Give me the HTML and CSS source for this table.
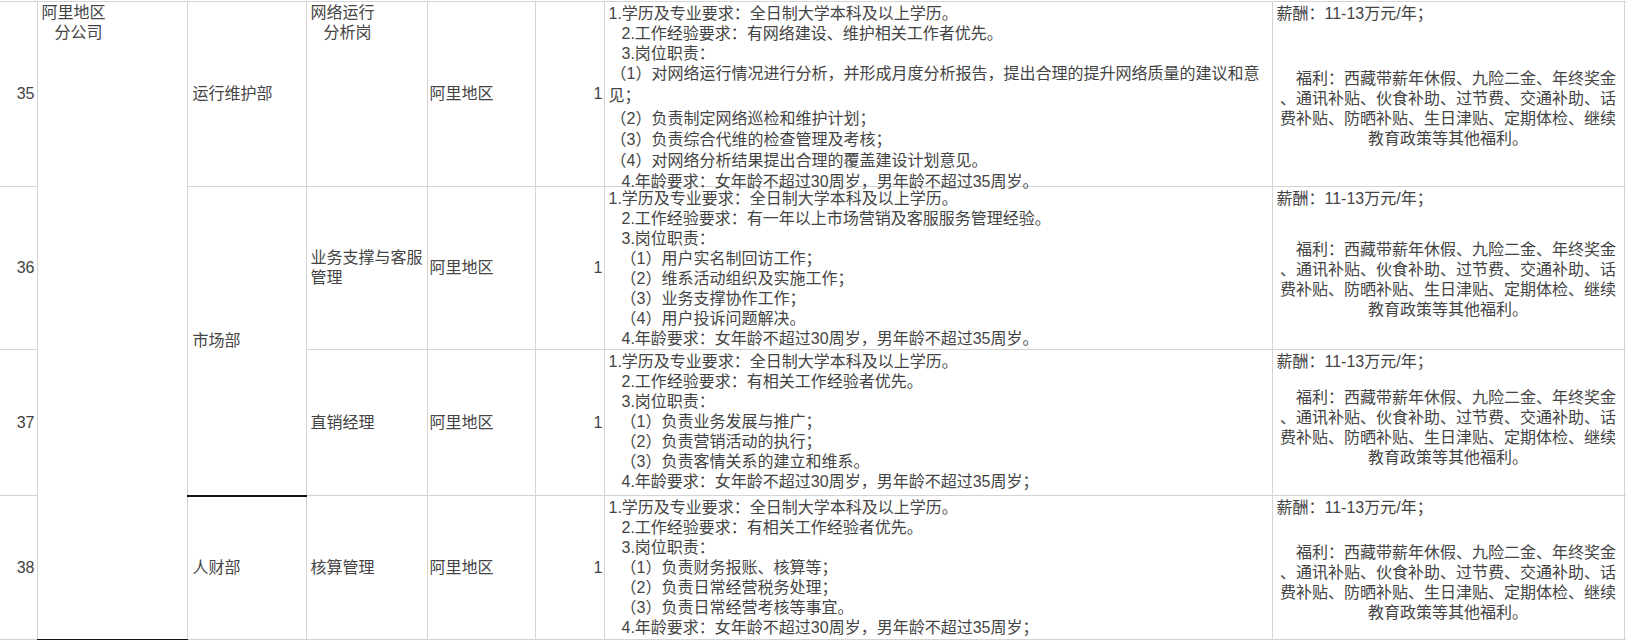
FILE: index.html
```html
<!DOCTYPE html>
<html lang="zh-CN">
<head>
<meta charset="utf-8">
<title>招聘岗位表</title>
<link rel="stylesheet" href="styles.css">
</head>
<body>
<table class="sheet">
  <colgroup>
    <col class="c-num">
    <col class="c-org">
    <col class="c-dept">
    <col class="c-post">
    <col class="c-area">
    <col class="c-qty">
    <col class="c-req">
    <col class="c-pay">
    <col class="c-extra">
  </colgroup>
  <tbody>
    <tr class="r35">
      <td class="num">35</td>
      <td class="org" rowspan="4"><div>阿里地区</div><div class="ind">分公司</div></td>
      <td class="dept">运行维护部</td>
      <td class="post top"><div>网络运行</div><div class="ind">分析岗</div></td>
      <td class="area">阿里地区</td>
      <td class="qty">1</td>
      <td class="req">
        <div class="ln">1.学历及专业要求：全日制大学本科及以上学历。</div>
        <div class="ln ind">2.工作经验要求：有网络建设、维护相关工作者优先。</div>
        <div class="ln ind">3.岗位职责：</div>
        <div class="ln sub0">（1）对网络运行情况进行分析，并形成月度分析报告，提出合理的提升网络质量的建议和意</div>
        <div class="ln g2">见；</div>
        <div class="ln sub0 g3">（2）负责制定网络巡检和维护计划；</div>
        <div class="ln sub0 g1">（3）负责综合代维的检查管理及考核；</div>
        <div class="ln sub0 g1">（4）对网络分析结果提出合理的覆盖建设计划意见。</div>
        <div class="ln ind g1 last">4.年龄要求：女年龄不超过30周岁，男年龄不超过35周岁。</div>
      </td>
      <td class="pay">
        <div>薪酬：11-13万元/年；</div>
        <div class="fl fl35">　福利：西藏带薪年休假、九险二金、年终奖金<br>、通讯补贴、伙食补助、过节费、交通补助、话<br>费补贴、防晒补贴、生日津贴、定期体检、继续<br>教育政策等其他福利。</div>
      </td>
      <td class="extra"></td>
    </tr>
    <tr class="r36">
      <td class="num">36</td>
      <td class="dept dept-mkt" rowspan="2">市场部</td>
      <td class="post"><div>业务支撑与客服</div><div>管理</div></td>
      <td class="area">阿里地区</td>
      <td class="qty">1</td>
      <td class="req">
        <div class="ln">1.学历及专业要求：全日制大学本科及以上学历。</div>
        <div class="ln ind">2.工作经验要求：有一年以上市场营销及客服服务管理经验。</div>
        <div class="ln ind">3.岗位职责：</div>
        <div class="ln sub">（1）用户实名制回访工作；</div>
        <div class="ln sub">（2）维系活动组织及实施工作；</div>
        <div class="ln sub">（3）业务支撑协作工作；</div>
        <div class="ln sub">（4）用户投诉问题解决。</div>
        <div class="ln ind">4.年龄要求：女年龄不超过30周岁，男年龄不超过35周岁。</div>
      </td>
      <td class="pay">
        <div>薪酬：11-13万元/年；</div>
        <div class="fl fl36">　福利：西藏带薪年休假、九险二金、年终奖金<br>、通讯补贴、伙食补助、过节费、交通补助、话<br>费补贴、防晒补贴、生日津贴、定期体检、继续<br>教育政策等其他福利。</div>
      </td>
      <td class="extra"></td>
    </tr>
    <tr class="r37">
      <td class="num">37</td>
      <td class="post">直销经理</td>
      <td class="area">阿里地区</td>
      <td class="qty">1</td>
      <td class="req">
        <div class="ln">1.学历及专业要求：全日制大学本科及以上学历。</div>
        <div class="ln ind">2.工作经验要求：有相关工作经验者优先。</div>
        <div class="ln ind">3.岗位职责：</div>
        <div class="ln sub">（1）负责业务发展与推广；</div>
        <div class="ln sub">（2）负责营销活动的执行；</div>
        <div class="ln sub">（3）负责客情关系的建立和维系。</div>
        <div class="ln ind">4.年龄要求：女年龄不超过30周岁，男年龄不超过35周岁；</div>
      </td>
      <td class="pay">
        <div>薪酬：11-13万元/年；</div>
        <div class="fl fl37">　福利：西藏带薪年休假、九险二金、年终奖金<br>、通讯补贴、伙食补助、过节费、交通补助、话<br>费补贴、防晒补贴、生日津贴、定期体检、继续<br>教育政策等其他福利。</div>
      </td>
      <td class="extra"></td>
    </tr>
    <tr class="r38">
      <td class="num">38</td>
      <td class="dept">人财部</td>
      <td class="post">核算管理</td>
      <td class="area">阿里地区</td>
      <td class="qty">1</td>
      <td class="req">
        <div class="ln">1.学历及专业要求：全日制大学本科及以上学历。</div>
        <div class="ln ind">2.工作经验要求：有相关工作经验者优先。</div>
        <div class="ln ind">3.岗位职责：</div>
        <div class="ln sub">（1）负责财务报账、核算等；</div>
        <div class="ln sub">（2）负责日常经营税务处理；</div>
        <div class="ln sub">（3）负责日常经营考核等事宜。</div>
        <div class="ln ind">4.年龄要求：女年龄不超过30周岁，男年龄不超过35周岁；</div>
      </td>
      <td class="pay">
        <div>薪酬：11-13万元/年；</div>
        <div class="fl fl38">　福利：西藏带薪年休假、九险二金、年终奖金<br>、通讯补贴、伙食补助、过节费、交通补助、话<br>费补贴、防晒补贴、生日津贴、定期体检、继续<br>教育政策等其他福利。</div>
      </td>
      <td class="extra"></td>
    </tr>
  </tbody>
</table>
</body>
</html>
```

FILE: styles.css
```css
html, body {
  margin: 0;
  padding: 0;
  background: #ffffff;
  overflow: hidden;
}

body {
  font-family: "Liberation Sans", "Noto Sans CJK SC", sans-serif;
  font-size: 16px;
  color: #444444;
}

.sheet {
  border-collapse: collapse;
  table-layout: fixed;
  width: 1660px;
  margin-top: 1px;
}

.c-num { width: 37px; }
.c-org { width: 150px; }
.c-dept { width: 119px; }
.c-post { width: 121px; }
.c-area { width: 108px; }
.c-qty { width: 69px; }
.c-req { width: 668px; }
.c-pay { width: 352px; }
.c-extra { width: 36px; }

.sheet td {
  border: 1px solid #d4d4d4;
  padding: 0 3px;
  vertical-align: middle;
  line-height: 20px;
  white-space: nowrap;
}

.r35 { height: 185px; }
.r36 { height: 163px; }
.r37 { height: 146px; }
.r38 { height: 144px; }

.sheet td.num {
  border-left: none;
  text-align: right;
  padding-right: 2px;
}

.sheet td.org {
  vertical-align: top;
  padding: 1px 4px;
  border-bottom: 2px solid #111;
}

.ind { padding-left: 13px; }

.sheet td.dept { padding-left: 5px; }

.sheet td.dept-mkt { border-bottom: 2px solid #111; }

.sheet td.post { padding-left: 4px; }
.sheet td.post.top { vertical-align: top; padding-top: 1px; }

.sheet td.area { padding-left: 2px; }

.sheet td.qty {
  text-align: right;
  padding-right: 1px;
}

.sheet td.req {
  vertical-align: top;
  padding: 2px 3px 0 4px;
}

.ln { height: 20px; }
.ln.last { height: 12px; }

.sub0 { padding-left: 2px; }
.sub { padding-left: 12px; }

.g1 { margin-top: 1px; }
.g2 { margin-top: 2px; }
.g3 { margin-top: 3px; }

.sheet td.pay {
  vertical-align: top;
  padding: 2px 4px 0 4px;
}

.fl {
  text-align: center;
}

.fl35 { margin-top: 45px; }
.fl36 { margin-top: 31px; }
.fl37 { margin-top: 16px; }
.fl38 { margin-top: 25px; }

.sheet td.extra {
  border-right: none;
}
```
